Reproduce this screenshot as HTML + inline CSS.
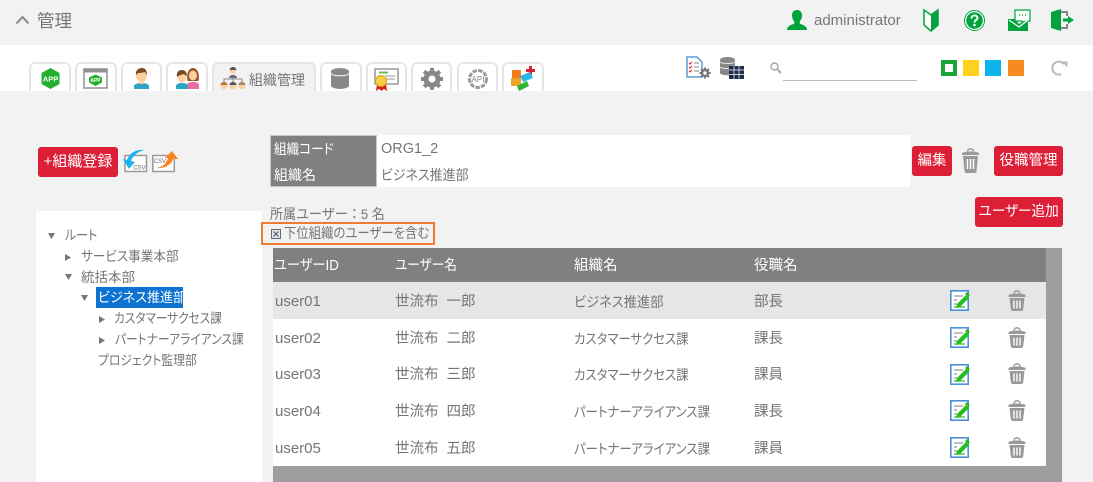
<!DOCTYPE html>
<html lang="ja"><head><meta charset="utf-8">
<style>
html,body{margin:0;padding:0}
body{width:1093px;height:482px;overflow:hidden;background:#f2f2f2;position:relative;font-family:"Liberation Sans","Noto Sans CJK JP",sans-serif;color:#757575;font-size:14px;font-feature-settings:"palt"}
.a{position:absolute;white-space:nowrap;line-height:20px;transform-origin:0 0}
.tab{position:absolute;top:62px;height:29px;box-sizing:border-box;background:#fff;border:2px solid #e6e6e6;border-bottom:0;border-radius:6px 6px 0 0}
.btn{position:absolute;background:#dc1e37;color:#fff;border-radius:3px;text-align:center;font-size:14.500px;box-sizing:border-box;height:30px;line-height:30px;white-space:nowrap}
svg{position:absolute;overflow:visible}
.row{position:absolute;left:273px;width:773px;height:37px;background:#fff}
</style></head><body>
<div style="position:absolute;left:0;top:45px;width:1093px;height:46px;background:#fff"></div>
<svg style="left:15px;top:15px" width="15" height="10"><path d="M1.500 8.500 7.500 2l6 6.500" fill="none" stroke="#888" stroke-width="2"/></svg>
<div class="a" style="left:37px;top:11px;font-size:17.500px;color:#777">管理</div>

<svg style="left:787px;top:9px" width="20" height="22"><path d="M0 21c0-4 4-5 6.500-6 1-.5 1-2 .5-3-1-1-2-3-2-5.500C5 3 7 1 10 1s5 2 5 5.500c0 2.500-1 4.500-2 5.500-.5 1-.5 2.500.5 3 2.500 1 6.500 2 6.500 6z" fill="#00a33c"/></svg>
<div class="a" style="left:814px;top:11px;font-size:15px;color:#777">administrator</div>
<svg style="left:923px;top:8px" width="16" height="24"><path d="M1 2l7 5 7-5v15l-7 6-7-6z" fill="#fff" stroke="#00a33c" stroke-width="1.500"/><path d="M8 7l7-5v15l-7 6z" fill="#00a33c"/></svg>
<svg style="left:964px;top:10px" width="21" height="21"><circle cx="10.500" cy="10.500" r="10" fill="#fff" stroke="#00a33c"/><circle cx="10.500" cy="10.500" r="8.300" fill="#00a33c"/><path d="M7.500 8.500c0-4 6-4 6-.5 0 2-3 2-3 4.500" fill="none" stroke="#fff" stroke-width="2"/><circle cx="10.500" cy="15" r="1.300" fill="#fff"/></svg>
<svg style="left:1008px;top:9px" width="23" height="23"><path d="M7 1h15v11H18l-2 2-2-2H7z" fill="#fff" stroke="#00a33c" stroke-width="1.200"/><path d="M0 10h6l5 5 5-3h3l1 1v9H0z" fill="#00a33c"/><path d="M1 11l10 7 9-7" fill="none" stroke="#fff" stroke-width="1.200"/><path d="M11 6h1M14 6h1M17 6h1" stroke="#00a33c" stroke-width="1.500"/></svg>
<svg style="left:1051px;top:9px" width="23" height="23"><path d="M0 3 10 0v22L0 19z" fill="#00a33c"/><path d="M10 3h6v4M16 15v4h-6" fill="none" stroke="#888" stroke-width="2"/><path d="M12 11h6" stroke="#00a33c" stroke-width="3"/><path d="M17 7l6 4-6 4z" fill="#00a33c"/></svg>

<div class="tab" style="left:29px;width:42px"></div>
<div class="tab" style="left:75px;width:42px"></div>
<div class="tab" style="left:121px;width:41px"></div>
<div class="tab" style="left:166px;width:42px"></div>
<div class="tab" style="left:212px;width:104px;background:#f2f2f2"></div>
<div class="tab" style="left:320px;width:42px"></div>
<div class="tab" style="left:366px;width:41px"></div>
<div class="tab" style="left:411px;width:41px"></div>
<div class="tab" style="left:457px;width:41px"></div>
<div class="tab" style="left:502px;width:42px"></div>

<svg style="left:41px;top:68px" width="19" height="21"><path d="M9.500 0 18.500 5v11l-9 5-9-5V5z" fill="#22b02e"/><text x="9.500" y="13.500" font-size="7.500" font-weight="700" fill="#fff" text-anchor="middle" font-family="Liberation Sans">APP</text></svg>
<svg style="left:83px;top:68px" width="25" height="21"><rect x="1" y="1" width="23" height="19" fill="#fff" stroke="#909090" stroke-width="1.500"/><rect x="1" y="1" width="23" height="3.500" fill="#909090"/><path d="M12.500 6.500 19 9.500v5l-6.500 3.500L6 14.500v-5z" fill="#22b02e"/><text x="12.500" y="14" font-size="5" font-weight="700" fill="#fff" text-anchor="middle" font-family="Liberation Sans">APP</text></svg>
<svg style="left:134px;top:68px" width="15" height="21"><path d="M0 21v-3c0-2 4-3 7.500-3s7.500 1 7.500 3v3z" fill="#2aa5c4"/><ellipse cx="7.500" cy="7.500" rx="5.500" ry="6.500" fill="#fbcf9f"/><rect x="5.500" y="12" width="4" height="4" fill="#fbcf9f"/><path d="M2 7C1 2 5 0 8 0s5 2 5 7c-1-2-2-3-3-3-2 1-5 1-6 1z" fill="#7a4a20"/></svg>
<svg style="left:176px;top:68px" width="23" height="21"><path d="M11 21v-3c0-3 2-4 6-4s6 1 6 4v3z" fill="#ea6d9b"/><path d="M11.500 13C10 5 13 0 17 0s7 5 5.500 13z" fill="#96552c"/><ellipse cx="17" cy="7.500" rx="4" ry="5" fill="#fbcf9f"/><path d="M0 21v-3c0-2 3-3 6-3s6 1 6 3v3z" fill="#2aa5c4"/><ellipse cx="6" cy="9" rx="4.500" ry="5.500" fill="#fbcf9f"/><path d="M1 9C0 4 3 2 6 2s5 2 5 6c-2-1-3-2-4-2-1 1-4 1-6 3z" fill="#7a4a20"/></svg>
<svg style="left:220px;top:67px" width="26" height="23"><circle cx="13" cy="3.500" r="3.300" fill="#fbcf9f"/><path d="M9.700 3c0-4 6.600-4 6.600 0z" fill="#555"/><path d="M9 11c0-4 8-4 8 0z" fill="#667"/><path d="M4 15v-3h18v3M13 10v5" fill="none" stroke="#888"/><circle cx="4" cy="19" r="3.300" fill="#fbcf9f"/><path d="M.5 18c0-4 7-4 7 0z" fill="#b97a3c"/><circle cx="13" cy="19" r="3.300" fill="#fbcf9f"/><path d="M9.500 18c0-4 7-4 7 0z" fill="#555"/><circle cx="22" cy="19" r="3.300" fill="#fbcf9f"/><path d="M18.500 18c0-4 7-4 7 0z" fill="#a86"/></svg>
<div class="a" style="left:249px;top:70px;font-size:14px;color:#777">組織管理</div>
<svg style="left:331px;top:68px" width="18" height="21"><path d="M0 3.500C0-1 18-1 18 3.500v14c0 4.500-18 4.500-18 0z" fill="#888"/><path d="M0 5.500c2 3 16 3 18 0" fill="none" stroke="#fff"/></svg>
<svg style="left:374px;top:68px" width="25" height="23"><rect x="1" y="1" width="23" height="15" fill="#fff" stroke="#999" stroke-width="1.500"/><rect x="5" y="3.500" width="9" height="2" fill="#6cc04a"/><path d="M11 8h10M11 11h10" stroke="#bbb" stroke-width="1.500"/><path d="M3 16l-1 7 3-2 3 2-1-7zM6 16l1 7 3-2 3 2-1-7z" fill="#d81e1e"/><circle cx="7" cy="13" r="5.500" fill="#f8d044" stroke="#e0a020"/></svg>
<svg style="left:421px;top:68px" width="22" height="22"><circle cx="11" cy="11" r="6" fill="none" stroke="#888" stroke-width="5"/><path d="M11 0v5M11 17v5M0 11h5M17 11h5M3.200 3.200l3.500 3.500M15.300 15.300l3.500 3.500M3.200 18.800l3.500-3.500M15.300 6.700l3.500-3.500" stroke="#888" stroke-width="4"/></svg>
<svg style="left:468px;top:69px" width="20" height="20"><circle cx="10" cy="10" r="8.500" fill="#fff" stroke="#999" stroke-width="3" stroke-dasharray="4.500 1.200"/><text x="10" y="13" font-size="8" fill="#888" text-anchor="middle" font-family="Liberation Sans">API</text></svg>
<svg style="left:511px;top:66px" width="26" height="25"><path d="M18 0h3v3h3v3h-3v3h-3V6h-3V3h3z" fill="#dc1e37"/><rect x="1" y="4" width="9" height="9" rx="1" fill="#f07d1a"/><rect x="0" y="12" width="10" height="8" rx="1" fill="#e9a628"/><path d="M9 10l10-4 3 6-10 4z" fill="#28b8e0"/><path d="M6 20l10-5 2 5-10 5z" fill="#2fb52f"/></svg>

<svg style="left:686px;top:56px" width="25" height="23"><path d="M1 1h10l5 5v15H1z" fill="#fff" stroke="#5b9bd5" stroke-width="1.500"/><path d="M3 7l1 1 2-2M3 11l1 1 2-2M3 15l1 1 2-2" fill="none" stroke="#dc1e37"/><path d="M8 7h5M8 11h5M8 15h5" stroke="#888"/><circle cx="19" cy="17" r="3" fill="#fff" stroke="#777" stroke-width="2.500"/><path d="M19 11.500v2M19 20.500v2M13.500 17h2M22.500 17h2M15 13l1.500 1.500M21.500 19.500l1.500 1.500M15 21l1.500-1.500M21.500 14.500L23 13" stroke="#777" stroke-width="2"/></svg>
<svg style="left:720px;top:57px" width="24" height="23"><path d="M0 3c0-4 15-4 15 0v13c0 3-15 3-15 0z" fill="#888"/><path d="M0 5c2 2 13 2 15 0M0 10c2 2 13 2 15 0" fill="none" stroke="#fff" stroke-width=".8"/><rect x="9" y="9" width="15" height="13" fill="#1b2e4b"/><path d="M9 13h15M9 17.500h15M14 9v13M19 9v13" stroke="#fff" stroke-width=".7"/></svg>
<svg style="left:770px;top:62px" width="12" height="12"><circle cx="4.500" cy="4.500" r="3.500" fill="none" stroke="#aaa" stroke-width="1.500"/><path d="M7 7l4 4" stroke="#aaa" stroke-width="2"/></svg>
<div style="position:absolute;left:783px;top:80px;width:134px;height:1px;background:#bbb"></div>
<div style="position:absolute;left:941px;top:60px;width:16px;height:16px;box-sizing:border-box;border:4px solid #1aa53c;background:#fff"></div>
<div style="position:absolute;left:963px;top:60px;width:16px;height:16px;background:#fdd21d"></div>
<div style="position:absolute;left:985px;top:60px;width:16px;height:16px;background:#0cb4ee"></div>
<div style="position:absolute;left:1008px;top:60px;width:16px;height:16px;background:#f88a20"></div>
<svg style="left:1052px;top:60px" width="16" height="16"><path d="M12 4.200A6.500 6.500 0 1 0 9 14.200" fill="none" stroke="#bbb" stroke-width="2"/><path d="M9.500 1.500h6V7.500z" fill="#bbb"/></svg>

<div class="btn" style="left:38px;top:147px;width:80px;font-size:15px">+組織登録</div>
<svg style="left:121px;top:149px" width="27" height="24"><rect x="4" y="6.500" width="21.500" height="16" fill="#fff" stroke="#999" stroke-width="1.500"/><text x="18.500" y="20.500" font-size="6" fill="#666" text-anchor="middle" font-family="Liberation Sans">CSV</text><path d="M23 1C14 0 8 5 6 11L2 10 8 20 14 13 10 12C12 7 16 3 23 1z" fill="#18b4ea"/></svg>
<svg style="left:152px;top:149px" width="27" height="24"><rect x=".8" y="6.500" width="21.500" height="16" fill="#fff" stroke="#999" stroke-width="1.500"/><text x="8" y="14" font-size="6" fill="#666" text-anchor="middle" font-family="Liberation Sans">CSV</text><path d="M4 19C12 18 15 13 16 9L13 9 20 2 26 10 21 10C20 15 13 20 4 19z" fill="#f8861e"/></svg>

<div style="position:absolute;left:36px;top:211px;width:226px;height:271px;background:#fff"></div>
<svg style="left:48px;top:233px" width="70" height="110"><path d="M0 0h7l-3.500 6zM17 21l6 3.500-6 3.500zM17 41h7l-3.500 6zM33 62h7l-3.500 6zM51 83l6 3.500-6 3.500zM51 104l6 3.500-6 3.500z" fill="#777"/></svg>
<div class="a" style="left:65px;top:226px;font-size:13.500px;transform:scaleX(.89)">ルート</div>
<div class="a" style="left:81px;top:247px;font-size:13.500px;transform:scaleX(.933)">サービス事業本部</div>
<div class="a" style="left:81px;top:268px;font-size:13.500px">統括本部</div>
<div style="position:absolute;left:96px;top:287px;width:87px;height:21px;background:#0e73d0"></div>
<div class="a" style="left:98px;top:288px;font-size:13.500px;color:#fff;transform:scaleX(.966)">ビジネス推進部</div>
<div class="a" style="left:114px;top:309px;font-size:13.500px;transform:scaleX(.864)">カスタマーサクセス課</div>
<div class="a" style="left:115px;top:330px;font-size:13.500px;transform:scaleX(.872)">パートナーアライアンス課</div>
<div class="a" style="left:98px;top:351px;font-size:13.500px;transform:scaleX(.876)">プロジェクト監理部</div>

<div style="position:absolute;left:270px;top:135px;width:640px;height:52px;background:#fff"></div>
<div style="position:absolute;left:270px;top:135px;width:107px;height:52px;box-sizing:border-box;background:#808080;border:1px solid #c8c8c8"></div>
<div class="a" style="left:274px;top:139px;color:#fff;font-size:14px;transform:scaleX(.9)">組織コード</div>
<div class="a" style="left:274px;top:165px;color:#fff;font-size:14px">組織名</div>
<div class="a" style="left:381px;top:139px;font-size:14.500px">ORG1_2</div>
<div class="a" style="left:381px;top:165px;font-size:14px;transform:scaleX(.926)">ビジネス推進部</div>

<div class="btn" style="left:912px;top:146px;width:40px">編集</div>
<svg style="left:961px;top:148px" width="19" height="26"><path d="M6.500 3.500C6.500 0 12.500 0 12.500 3.500" fill="none" stroke="#999" stroke-width="1.500"/><path d="M1 5c3-2 14-2 17 0v2H1zM2 8h15l-1.500 15c-.2 2-1.500 2-2.500 2H6c-1 0-2.300 0-2.500-2z" fill="#999"/><path d="M6.500 11v10M9.500 11v10M12.500 11v10" stroke="#fff" stroke-width="1.500"/></svg>
<div class="btn" style="left:994px;top:146px;width:69px">役職管理</div>
<div class="btn" style="left:975px;top:197px;width:88px"><span style="display:inline-block;transform:scaleX(.94)">ユーザー追加</span></div>

<div class="a" style="left:270px;top:204px;font-size:14px;font-feature-settings:normal;transform:scaleX(.93)">所属ユーザー：5 名</div>
<div style="position:absolute;left:261px;top:222px;width:174px;height:23px;box-sizing:border-box;border:2.500px solid #ee7d31"></div>
<svg style="left:271px;top:229px" width="10" height="10"><rect x=".5" y=".5" width="9" height="9" fill="#dce4ee" stroke="#666"/><path d="M2.500 2.500l5 5M7.500 2.500l-5 5" stroke="#555"/></svg>
<div class="a" style="left:284px;top:223px;font-size:14px;transform:scaleX(.884)">下位組織のユーザーを含む</div>

<div style="position:absolute;left:273px;top:248px;width:789px;height:234px;background:#9e9e9e"></div>
<div style="position:absolute;left:273px;top:248px;width:773px;height:34px;background:#808080"></div>
<div class="a" style="left:274px;top:256px;color:#fff;font-size:14.500px;transform:scaleX(.915)">ユーザーID</div>
<div class="a" style="left:395px;top:256px;color:#fff;font-size:14.500px;transform:scaleX(.873)">ユーザー名</div>
<div class="a" style="left:574px;top:256px;color:#fff;font-size:14.500px">組織名</div>
<div class="a" style="left:754px;top:256px;color:#fff;font-size:14.500px">役職名</div>

<div class="row" style="top:282px;background:#e6e6e6"></div>
<div class="row" style="top:319px"></div>
<div class="row" style="top:356px"></div>
<div class="row" style="top:392px;height:38px"></div>
<div class="row" style="top:429px"></div>

<div class="a" style="left:275px;top:292px;font-size:15px">user01</div>
<div class="a" style="left:395px;top:292px;font-size:14.500px">世流布&nbsp;&nbsp;一郎</div>
<div class="a" style="left:574px;top:292px;font-size:14px;transform:scaleX(.947)">ビジネス推進部</div>
<div class="a" style="left:754px;top:292px;font-size:14.500px">部長</div>

<div class="a" style="left:275px;top:329px;font-size:15px">user02</div>
<div class="a" style="left:395px;top:329px;font-size:14.500px">世流布&nbsp;&nbsp;二郎</div>
<div class="a" style="left:574px;top:329px;font-size:14px;transform:scaleX(.884)">カスタマーサクセス課</div>
<div class="a" style="left:754px;top:329px;font-size:14.500px">課長</div>

<div class="a" style="left:275px;top:365px;font-size:15px">user03</div>
<div class="a" style="left:395px;top:365px;font-size:14.500px">世流布&nbsp;&nbsp;三郎</div>
<div class="a" style="left:574px;top:365px;font-size:14px;transform:scaleX(.884)">カスタマーサクセス課</div>
<div class="a" style="left:754px;top:365px;font-size:14.500px">課員</div>

<div class="a" style="left:275px;top:402px;font-size:15px">user04</div>
<div class="a" style="left:395px;top:402px;font-size:14.500px">世流布&nbsp;&nbsp;四郎</div>
<div class="a" style="left:574px;top:402px;font-size:14px;transform:scaleX(.889)">パートナーアライアンス課</div>
<div class="a" style="left:754px;top:402px;font-size:14.500px">課長</div>

<div class="a" style="left:275px;top:439px;font-size:15px">user05</div>
<div class="a" style="left:395px;top:439px;font-size:14.500px">世流布&nbsp;&nbsp;五郎</div>
<div class="a" style="left:574px;top:439px;font-size:14px;transform:scaleX(.889)">パートナーアライアンス課</div>
<div class="a" style="left:754px;top:439px;font-size:14.500px">課員</div>

<svg width="0" height="0" style="left:0;top:0"><defs>
<g id="ed"><rect x=".8" y=".8" width="17.400" height="19.400" fill="#fff" stroke="#4a90d9" stroke-width="1.600"/><path d="M4 6h9M4 10h3M4 14h3" stroke="#999" stroke-width="1.200"/><path d="M4 17h11" stroke="#33b522" stroke-width="1.200"/><path d="M7 14l9-9 3 3-9 9-4 1z" fill="#22c01e"/><path d="M17 2l3 3-2 2-3-3z" fill="#33b522"/></g>
<g id="tr"><path d="M6 3.500C6 0 12 0 12 3.500" fill="none" stroke="#999" stroke-width="1.500"/><path d="M.5 5c3-2 14-2 17 0v2H.5zM1.500 8h15l-1.300 11c-.2 2-1.500 2-2.500 2H5.300c-1 0-2.300 0-2.500-2z" fill="#999"/><path d="M6 10.500v8M9 10.500v8M12 10.500v8" stroke="#fff" stroke-width="1.400"/></g>
</defs></svg>
<svg style="left:950px;top:290px" width="21" height="21"><use href="#ed"/></svg>
<svg style="left:950px;top:327px" width="21" height="21"><use href="#ed"/></svg>
<svg style="left:950px;top:364px" width="21" height="21"><use href="#ed"/></svg>
<svg style="left:950px;top:400px" width="21" height="21"><use href="#ed"/></svg>
<svg style="left:950px;top:437px" width="21" height="21"><use href="#ed"/></svg>
<svg style="left:1008px;top:290px" width="18" height="22"><use href="#tr"/></svg>
<svg style="left:1008px;top:327px" width="18" height="22"><use href="#tr"/></svg>
<svg style="left:1008px;top:363px" width="18" height="22"><use href="#tr"/></svg>
<svg style="left:1008px;top:400px" width="18" height="22"><use href="#tr"/></svg>
<svg style="left:1008px;top:437px" width="18" height="22"><use href="#tr"/></svg>
</body></html>
